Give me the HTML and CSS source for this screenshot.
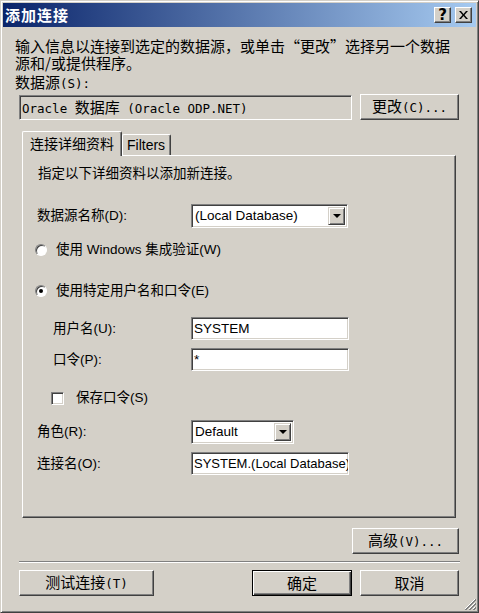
FILE: index.html
```html
<!DOCTYPE html>
<html lang="zh-CN">
<head>
    <meta charset="UTF-8">
    <meta name="viewport" content="width=device-width, initial-scale=1.0">
    <title>添加连接</title>
    <link rel="stylesheet" href="styles.css">
</head>
<body>

<div class="window">
    <div class="titlebar">
        <span class="title">添加连接</span>
        <div class="caption-btns">
            <span class="cap-btn help">?</span>
            <span class="cap-btn">
                <svg width="9" height="8" viewBox="0 0 9 8"><path d="M0 0h2l2.5 3 2.5-3h2L5.5 4 9 8H7L4.5 5 2 8H0l3.5-4z" fill="#000"/></svg>
            </span>
        </div>
    </div>

    <div class="content">
        <p class="intro ss">输入信息以连接到选定的数据源，或单击“更改”选择另一个数据<br>源和/或提供程序。</p>
        <div class="src-label ss">数据源<span class="lat">(S):</span></div>
        <div class="src-row">
            <div class="src-box ss"><span class="lat">Oracle </span>数据库<span class="lat"> (Oracle ODP.NET)</span></div>
            <button class="btn ss change">更改<span class="lat">(C)...</span></button>
        </div>

        <div class="tabs">
            <div class="tab active">连接详细资料</div>
            <div class="tab">Filters</div>
        </div>
        <div class="panel">
            <p class="hint">指定以下详细资料以添加新连接。</p>

            <div class="row r-source">
                <span class="lbl">数据源名称(D):</span>
                <div class="combo wide">
                    <span class="combo-text">(Local Database)</span>
                    <span class="drop"><i></i></span>
                </div>
            </div>

            <div class="row r-radio1">
                <span class="radio"></span>
                <span>使用 Windows 集成验证(W)</span>
            </div>
            <div class="row r-radio2">
                <span class="radio checked"></span>
                <span>使用特定用户名和口令(E)</span>
            </div>

            <div class="row r-user">
                <span class="lbl sub">用户名(U):</span>
                <div class="field">SYSTEM</div>
            </div>
            <div class="row r-pwd">
                <span class="lbl sub">口令(P):</span>
                <div class="field">*</div>
            </div>
            <div class="row r-check">
                <span class="check"></span>
                <span>保存口令(S)</span>
            </div>

            <div class="row r-role">
                <span class="lbl">角色(R):</span>
                <div class="combo narrow">
                    <span class="combo-text">Default</span>
                    <span class="drop"><i></i></span>
                </div>
            </div>
            <div class="row r-conn">
                <span class="lbl">连接名(O):</span>
                <div class="field conn">SYSTEM.(Local Database)</div>
            </div>
        </div>

        <div class="adv-row">
            <button class="btn ss adv">高级<span class="lat">(V)...</span></button>
        </div>
        <div class="sep"></div>
        <div class="bottom-row">
            <button class="btn ss test">测试连接<span class="lat">(T)</span></button>
            <button class="btn ss ok default">确定</button>
            <button class="btn ss cancel">取消</button>
        </div>
    </div>

    <svg class="grip" width="12" height="12" viewBox="0 0 12 12">
        <path d="M11 1L1 11M11 5L5 11M11 9L9 11" stroke="#fff" stroke-width="1"/>
        <path d="M12 1L1 12M12 2L2 12M12 5L5 12M12 6L6 12M12 9L9 12M12 10L10 12" stroke="#808080" stroke-width="1"/>
    </svg>
</div>

</body>
</html>
```

FILE: styles.css
```css
body {
    margin: 0;
    background: #d4d0c8;
}

.window {
    width: 479px;
    height: 613px;
    box-sizing: border-box;
    border: 1px solid;
    border-color: #d4d0c8 #404040 #404040 #d4d0c8;
    box-shadow: inset 1px 1px #fff, inset -1px -1px #808080;
    padding: 2px;
    background: #d4d0c8;
    position: relative;
}

/* title bar */
.titlebar {
    height: 24px;
    display: flex;
    align-items: center;
    justify-content: space-between;
    padding: 0 4px 0 2px;
    background: linear-gradient(to right, #0a246a, #a6caf0);
}
.title {
    color: #fff;
    font: bold 15px/16px "Noto Sans CJK SC", sans-serif;
    letter-spacing: 1px;
}
.caption-btns {
    display: flex;
    gap: 4px;
}
.cap-btn {
    width: 17px;
    height: 16px;
    box-sizing: border-box;
    display: flex;
    align-items: center;
    justify-content: center;
    background: #d4d0c8;
    border: 1px solid;
    border-color: #fff #404040 #404040 #fff;
    box-shadow: inset -1px -1px #808080;
}
.cap-btn.help {
    font: bold 15px/14px "DejaVu Sans", sans-serif;
    color: #000;
}

/* SimSun-like text outside the tab */
.ss {
    font-family: "Noto Sans CJK SC", sans-serif;
    font-size: 15px;
    line-height: 16px;
    color: #000;
}
.lat {
    font-family: "DejaVu Sans Mono", monospace;
    font-size: 12.5px;
}

.content {
    padding: 0 17px 0 16px;
}
.intro {
    margin: 10px 0 0 -4px;
    line-height: 17px;
    white-space: nowrap;
}
.src-label {
    margin: 3px 0 0 -4px;
    height: 16px;
}
.src-row {
    margin-top: 4px;
    display: flex;
    align-items: center;
    justify-content: space-between;
}
.src-box {
    width: 333px;
    height: 25px;
    box-sizing: border-box;
    padding: 3px 0 0 2px;
    white-space: nowrap;
    border: 1px solid;
    border-color: #808080 #fff #fff #808080;
    box-shadow: inset 1px 1px #404040, inset -1px -1px #d4d0c8;
}

/* buttons */
.btn {
    height: 26px;
    padding: 0;
    background: #d4d0c8;
    border: 1px solid;
    border-color: #fff #404040 #404040 #fff;
    box-shadow: inset -1px -1px #808080;
    border-radius: 0;
}
.change {
    width: 99px;
}
.default {
    border-color: #000;
    box-shadow: inset 1px 1px #fff, inset -1px -1px #404040, inset -2px -2px #808080;
}

/* tabs */
.tabs {
    margin: 11px 3px 0;
    height: 24px;
    display: flex;
    align-items: flex-end;
    font: 14px/16px "Liberation Sans", "Noto Sans CJK SC", sans-serif;
}
.tab {
    height: 21px;
    box-sizing: border-box;
    padding: 2px 5px 0 4px;
    border: 1px solid;
    border-bottom: 0;
    border-color: #fff #404040 #404040 #fff;
    box-shadow: inset -1px 0 #808080;
    border-radius: 2px 2px 0 0;
}
.tab.active {
    height: 25px;
    width: 100px;
    padding: 4px 0 0 7px;
    margin-bottom: -1px;
    background: #d4d0c8;
    position: relative;
    z-index: 1;
}

.panel {
    margin: 0 3px;
    height: 363px;
    box-sizing: border-box;
    border: 1px solid;
    border-color: #fff #404040 #404040 #fff;
    box-shadow: inset -1px -1px #808080;
    padding: 10px 14px 0 14px;
    font: 13.5px/16px "Liberation Sans", "Noto Sans CJK SC", sans-serif;
    color: #000;
}
.hint {
    margin: 0 0 0 1px;
    height: 16px;
}
.row {
    display: flex;
    align-items: center;
}
.lbl {
    width: 154px;
    flex: none;
}
.lbl.sub {
    padding-left: 16px;
    box-sizing: border-box;
}
.r-source { height: 24px; margin-top: 22px; }
.r-radio1 { height: 20px; margin-top: 12px; }
.r-radio2 { height: 20px; margin-top: 21px; }
.r-user { height: 23px; margin-top: 16px; }
.r-pwd { height: 23px; margin-top: 8px; }
.r-check { height: 20px; margin-top: 17px; }
.r-role { height: 24px; margin-top: 12px; }
.r-conn { height: 23px; margin-top: 8px; }

/* sunken inputs */
.combo, .field {
    height: 100%;
    box-sizing: border-box;
    background: #fff;
    border: 1px solid;
    border-color: #808080 #fff #fff #808080;
    box-shadow: inset 1px 1px #404040, inset -1px -1px #d4d0c8;
    display: flex;
    align-items: center;
    overflow: hidden;
    white-space: nowrap;
}
.field {
    width: 158px;
    padding-left: 2px;
}
.field.conn {
    font-size: 13px;
}
.combo {
    padding: 2px;
    justify-content: space-between;
}
.combo.wide { width: 157px; }
.combo.narrow { width: 103px; }
.combo-text {
    padding-left: 1px;
}
.drop {
    width: 17px;
    height: 100%;
    box-sizing: border-box;
    background: #d4d0c8;
    border: 1px solid;
    border-color: #d4d0c8 #404040 #404040 #d4d0c8;
    box-shadow: inset 1px 1px #fff, inset -1px -1px #808080;
    display: flex;
    align-items: center;
    justify-content: center;
}
.drop i {
    width: 0;
    height: 0;
    border-left: 4px solid transparent;
    border-right: 4px solid transparent;
    border-top: 4px solid #000;
}

.radio {
    width: 12px;
    height: 12px;
    margin: 0 9px 0 -2px;
    box-sizing: border-box;
    border-radius: 50%;
    background: #fff;
    border: 1px solid;
    border-color: #808080 #fff #fff #808080;
    box-shadow: inset 1px 1px #404040;
    display: flex;
    align-items: center;
    justify-content: center;
}
.radio.checked::after {
    content: "";
    width: 4px;
    height: 4px;
    border-radius: 50%;
    background: #000;
}
.check {
    width: 13px;
    height: 13px;
    margin: 0 12px 0 14px;
    box-sizing: border-box;
    background: #fff;
    border: 1px solid;
    border-color: #808080 #fff #fff #808080;
    box-shadow: inset 1px 1px #404040, inset -1px -1px #d4d0c8;
}

.adv-row {
    margin-top: 10px;
    display: flex;
    justify-content: flex-end;
}
.adv {
    width: 107px;
}
.sep {
    margin: 7px -1px 0 0;
    border-top: 1px solid #808080;
    border-bottom: 1px solid #fff;
    height: 0;
}
.bottom-row {
    margin-top: 7px;
    display: flex;
    gap: 8px;
}
.test { width: 135px; }
.ok { width: 100px; margin-left: auto; }
.cancel { width: 99px; }

.grip {
    position: absolute;
    right: 2px;
    bottom: 2px;
}
```
